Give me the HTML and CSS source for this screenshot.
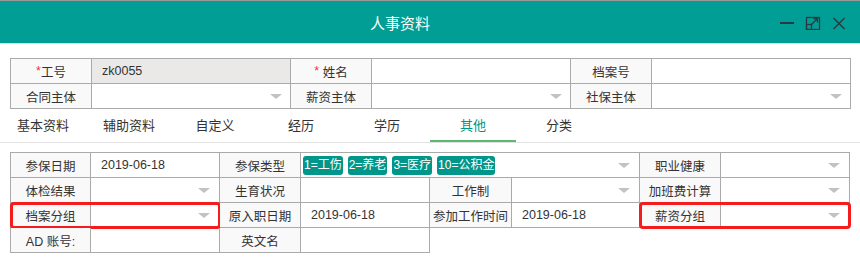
FILE: index.html
```html
<!DOCTYPE html>
<html lang="zh-CN">
<head>
    <meta charset="UTF-8">
    <meta name="viewport" content="width=device-width, initial-scale=1.0">
    <title>人事资料</title>
    <link rel="stylesheet" href="styles.css">
</head>
<body>
    <header class="titlebar">
        <div class="title">人事资料</div>
        <div class="win-btns">
            <svg width="16" height="16" viewBox="0 0 16 16"><path d="M1 9h14" stroke="currentColor" stroke-width="2" fill="none"/></svg>
            <svg width="16" height="16" viewBox="0 0 16 16" fill="none" stroke="currentColor" stroke-width="1.3">
                <rect x="1.5" y="3.5" width="13" height="12"/>
                <rect x="1.5" y="10.5" width="5" height="5"/>
                <path d="M6.5 10.5L12.5 4.5M8.5 4.5h4v4"/>
            </svg>
            <svg width="16" height="16" viewBox="0 0 16 16"><path d="M2.5 4L13.5 15M13.5 4L2.5 15" stroke="currentColor" stroke-width="1.5" fill="none"/></svg>
        </div>
    </header>

    <div class="form base">
        <div class="cell label"><span class="req">*</span>工号</div>
        <div class="cell value readonly">zk0055</div>
        <div class="cell label"><span class="req">*&nbsp;</span>姓名</div>
        <div class="cell value"></div>
        <div class="cell label">档案号</div>
        <div class="cell value"></div>
        <div class="cell label">合同主体</div>
        <div class="cell value select"></div>
        <div class="cell label">薪资主体</div>
        <div class="cell value select"></div>
        <div class="cell label">社保主体</div>
        <div class="cell value select"></div>
    </div>

    <nav class="tabs">
        <div class="tab">基本资料</div>
        <div class="tab">辅助资料</div>
        <div class="tab">自定义</div>
        <div class="tab">经历</div>
        <div class="tab">学历</div>
        <div class="tab active">其他</div>
        <div class="tab">分类</div>
    </nav>

    <div class="form detail">
        <div class="cell label">参保日期</div>
        <div class="cell value">2019-06-18</div>
        <div class="cell label">参保类型</div>
        <div class="cell value select tags">
            <span class="tag">1=工伤</span>
            <span class="tag">2=养老</span>
            <span class="tag">3=医疗</span>
            <span class="tag">10=公积金</span>
        </div>
        <div class="cell label">职业健康</div>
        <div class="cell value select"></div>

        <div class="cell label">体检结果</div>
        <div class="cell value select"></div>
        <div class="cell label">生育状况</div>
        <div class="cell value"></div>
        <div class="cell label">工作制</div>
        <div class="cell value select"></div>
        <div class="cell label">加班费计算</div>
        <div class="cell value select"></div>

        <div class="pair marked">
            <div class="cell label">档案分组</div>
            <div class="cell value select"></div>
        </div>
        <div class="cell label">原入职日期</div>
        <div class="cell value">2019-06-18</div>
        <div class="cell label">参加工作时间</div>
        <div class="cell value">2019-06-18</div>
        <div class="pair marked">
            <div class="cell label">薪资分组</div>
            <div class="cell value select"></div>
        </div>

        <div class="cell label">AD 账号:</div>
        <div class="cell value"></div>
        <div class="cell label">英文名</div>
        <div class="cell value"></div>
    </div>
</body>
</html>
```

FILE: styles.css
```css
body {
    margin: 0;
    font-family: "Liberation Sans", "Noto Sans CJK SC", sans-serif;
    font-size: 12.5px;
    color: #333;
    background-color: #ffffff;
}
.titlebar {
    display: flex;
    align-items: center;
    height: 42px;
    background-color: #009e94;
    border-top: 1px solid #999;
    border-bottom: 1px solid #c6e6e2;
}
.title {
    flex: 1;
    text-align: center;
    padding-left: 21px;
    color: #ffffff;
    font-size: 15px;
}
.win-btns {
    display: flex;
    gap: 10px;
    padding-right: 13px;
    color: #2b3a42;
}
.win-btns svg {
    display: block;
}
.form {
    display: grid;
    grid-auto-rows: 25px;
    width: fit-content;
    margin: 0 10px;
    border-top: 1px solid #aaa;
    border-left: 1px solid #aaa;
}
.base {
    grid-template-columns: 81px 199px 81px 199px 81px 199px;
    margin-top: 14px;
}
.detail {
    grid-template-columns: 80px 129px 81px 129px 82px 128px 81px 129px;
    margin-top: 9px;
}
.cell {
    display: flex;
    align-items: center;
    box-sizing: border-box;
    border-right: 1px solid #aaa;
    border-bottom: 1px solid #aaa;
    white-space: nowrap;
}
.label {
    justify-content: center;
    background-color: #f9f9f9;
}
.value {
    padding: 0 8px 0 10px;
}
.readonly {
    background-color: #ebe8e8;
}
.select::after {
    content: "";
    margin-left: auto;
    border-left: 6px solid transparent;
    border-right: 6px solid transparent;
    border-top: 5px solid #c2c2c2;
}
.detail .select::after {
    margin-right: 1px;
}
.req {
    color: #e53935;
}
.tags {
    grid-column: span 3;
    gap: 5px;
    padding-left: 2px;
}
.tag {
    height: 19px;
    line-height: 19px;
    padding: 0 1px;
    border-radius: 3px;
    font-size: 12px;
    background-color: #00968a;
    color: #ffffff;
}
.pair {
    display: grid;
    grid-column: span 2;
    grid-template-columns: subgrid;
}
.marked {
    outline: 3px solid #f41c1c;
    outline-offset: -2px;
    border-radius: 3px;
}
.tabs {
    display: flex;
    border-bottom: 1px solid #e2e2e2;
}
.tab {
    width: 86px;
    height: 33px;
    line-height: 33px;
    text-align: center;
    font-size: 13px;
    color: #333;
}
.tab.active {
    color: #00968a;
    box-shadow: inset 0 -2px 0 #5bb974;
}
```
